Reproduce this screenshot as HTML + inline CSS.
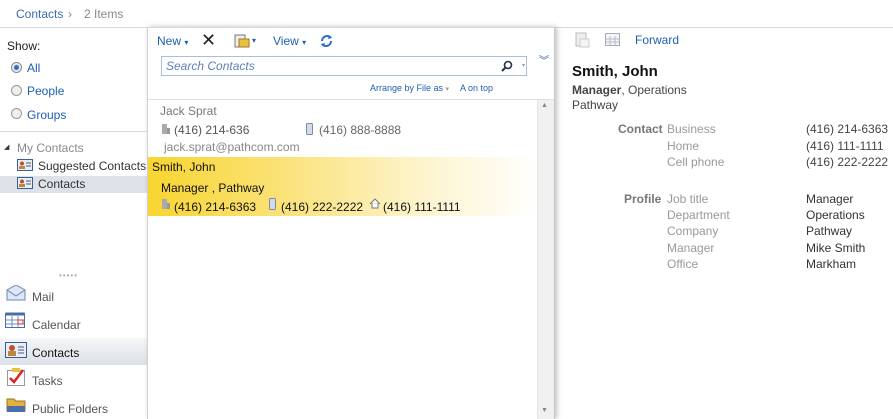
<!DOCTYPE html>
<html><head><meta charset="utf-8"><style>
*{margin:0;padding:0;box-sizing:border-box}
body{width:893px;height:419px;overflow:hidden;background:#fff;font-family:"Liberation Sans",sans-serif;font-size:12px;color:#333;position:relative}
.a{position:absolute;white-space:nowrap}
.blue{color:#1e5fb4}
.gray{color:#8a8a8a}
.ic{position:absolute}
</style></head><body>
<!-- top bar -->
<div class="a" style="left:16px;top:7px;font-size:12px;color:#3b6ea8">Contacts</div>
<div class="a" style="left:68px;top:7px;color:#888">›</div>
<div class="a" style="left:84px;top:7px;color:#888">2 Items</div>
<div class="a" style="left:0;top:27px;width:893px;height:1px;background:#d8d8d8"></div>

<!-- left pane -->
<div class="a" style="left:7px;top:39px;color:#222">Show:</div>
<div class="a" style="left:11px;top:62px;width:11px;height:11px;border-radius:50%;border:1px solid #888;background:radial-gradient(#2a6ebc 30%,#cde 45%,#fff 70%)"></div>
<div class="a blue" style="left:27px;top:61px">All</div>
<div class="a" style="left:11px;top:85px;width:11px;height:11px;border-radius:50%;border:1px solid #999;background:#eee"></div>
<div class="a blue" style="left:27px;top:84px">People</div>
<div class="a" style="left:11px;top:108px;width:11px;height:11px;border-radius:50%;border:1px solid #999;background:#eee"></div>
<div class="a blue" style="left:27px;top:108px">Groups</div>
<div class="a" style="left:0;top:131px;width:147px;height:1px;background:#d8d8d8"></div>
<div class="a" style="left:4px;top:143px;font-size:7px;color:#333">◢</div>
<div class="a gray" style="left:17px;top:141px">My Contacts</div>
<div class="a" style="left:0;top:176px;width:147px;height:17px;background:#dde2e9"></div>
<svg class="ic" style="left:17px;top:159px" width="16" height="12"><rect x="0.5" y="0.5" width="15" height="11" fill="#e8eef6" stroke="#3a5f96"/><circle cx="5" cy="4.5" r="2" fill="#c0502a"/><rect x="2" y="7" width="6" height="3" fill="#b84"/><line x1="9" y1="4" x2="14" y2="4" stroke="#557"/><line x1="9" y1="7" x2="14" y2="7" stroke="#557"/></svg>
<div class="a" style="left:38px;top:159px">Suggested Contacts</div>
<svg class="ic" style="left:17px;top:177px" width="16" height="12"><rect x="0.5" y="0.5" width="15" height="11" fill="#e8eef6" stroke="#3a5f96"/><circle cx="5" cy="4.5" r="2" fill="#c0502a"/><rect x="2" y="7" width="6" height="3" fill="#b84"/><line x1="9" y1="4" x2="14" y2="4" stroke="#557"/><line x1="9" y1="7" x2="14" y2="7" stroke="#557"/></svg>
<div class="a" style="left:38px;top:177px">Contacts</div>
<div class="a" style="left:59px;top:271px;color:#aaa;font-size:8px;letter-spacing:1px">•••••</div>
<!-- bottom nav -->
<svg class="ic" style="left:6px;top:285px" width="20" height="16"><path d="M1 5 L10 0 L19 5 V15 H1 Z" fill="#dde8f4" stroke="#6a87b0"/><path d="M1 5 L10 11 L19 5" fill="none" stroke="#6a87b0"/></svg>
<div class="a" style="left:32px;top:290px;color:#555">Mail</div>
<svg class="ic" style="left:5px;top:312px" width="20" height="16"><rect x="0.5" y="1.5" width="19" height="14" fill="#fff" stroke="#4a6ea8"/><rect x="0.5" y="0.5" width="19" height="3" fill="#4a6ea8"/><path d="M7 4V15M13 4V15M1 8H19M1 12H19" stroke="#6a8cc0"/><rect x="13" y="8" width="5" height="4" fill="none" stroke="#d33"/></svg>
<div class="a" style="left:32px;top:318px;color:#555">Calendar</div>
<div class="a" style="left:0;top:338px;width:147px;height:27px;background:linear-gradient(#f4f6f8,#dde2e8)"></div>
<svg class="ic" style="left:5px;top:342px" width="22" height="16"><rect x="0.5" y="0.5" width="21" height="15" fill="#e8eef6" stroke="#3a5f96"/><circle cx="7" cy="6" r="3" fill="#c0502a"/><rect x="3" y="9" width="8" height="5" fill="#b84"/><path d="M13 5H19M13 8H19M13 11H19" stroke="#557"/></svg>
<div class="a" style="left:32px;top:346px;color:#111">Contacts</div>
<svg class="ic" style="left:6px;top:367px" width="20" height="20"><rect x="1.5" y="3.5" width="17" height="15" fill="#fff" stroke="#999"/><rect x="6" y="1" width="8" height="4" fill="#e8c040"/><path d="M4 11 L8 15 L17 3" fill="none" stroke="#d22" stroke-width="2.5"/></svg>
<div class="a" style="left:32px;top:374px;color:#555">Tasks</div>
<svg class="ic" style="left:5px;top:395px" width="22" height="18"><path d="M2 4H9L11 6H20V16H2Z" fill="#e0b040" stroke="#a07820"/><rect x="2" y="11" width="18" height="6" fill="#4a6ea8"/></svg>
<div class="a" style="left:32px;top:402px;color:#555">Public Folders</div>

<!-- middle pane -->
<div class="a" style="left:147px;top:27px;width:408px;height:392px;border-left:1px solid #d0d0d0;border-right:1px solid #c8c8c8;border-top:1px solid #d8d8d8;box-shadow:2px 0 5px rgba(0,0,0,0.25);background:#fff"></div>
<div class="a blue" style="left:157px;top:34px">New <span style="font-size:8px">▾</span></div>
<div class="a" style="left:201px;top:30px;font-size:18px;color:#222">✕</div>
<svg class="ic" style="left:234px;top:34px" width="16" height="14"><rect x="1" y="1" width="10" height="12" fill="#eee" stroke="#777"/><rect x="5" y="5" width="10" height="8" fill="#e8c040" stroke="#a07820"/></svg>
<div class="a" style="left:252px;top:36px;font-size:8px;color:#1e5fb4">▾</div>
<div class="a blue" style="left:273px;top:34px">View <span style="font-size:8px">▾</span></div>
<svg class="ic" style="left:320px;top:34px" width="13" height="14"><path d="M2 7a5 5 0 0 1 9-3M11 7a5 5 0 0 1-9 3" fill="none" stroke="#2a6ed0" stroke-width="2"/><path d="M9 1l3 3-4 1z M4 13l-3-3 4-1z" fill="#2a6ed0"/></svg>
<div class="a" style="left:161px;top:56px;width:366px;height:20px;border:1px solid #a8c0e0"></div>
<div class="a" style="left:166px;top:59px;color:#5f80b8;font-style:italic;font-size:12px">Search Contacts</div>
<svg class="ic" style="left:501px;top:60px" width="12" height="12"><circle cx="7" cy="5" r="3.5" fill="none" stroke="#234" stroke-width="1.6"/><line x1="4.5" y1="7.5" x2="1" y2="11" stroke="#234" stroke-width="2"/></svg>
<div class="a" style="left:522px;top:62px;font-size:6px;color:#999">▾</div>
<div class="a" style="left:539px;top:58px;font-size:10px;color:#2a5ea8;line-height:7px">︾</div>
<div class="a blue" style="left:370px;top:83px;font-size:9px">Arrange by File as <span style="color:#999;font-size:7px">▾</span></div>
<div class="a blue" style="left:460px;top:83px;font-size:9px">A on top</div>
<div class="a" style="left:148px;top:99px;width:406px;height:1px;background:#e0e0e0"></div>
<!-- scrollbar -->
<div class="a" style="left:537px;top:100px;width:17px;height:319px;background:#f0f0f0;border-left:1px solid #e4e4e4"></div>
<div class="a" style="left:541px;top:102px;font-size:7px;color:#888">▲</div>
<div class="a" style="left:541px;top:407px;font-size:7px;color:#888">▼</div>
<!-- item 1 -->
<div class="a" style="left:160px;top:104px;color:#777">Jack Sprat</div>
<svg class="ic" style="left:161px;top:123px" width="10" height="12"><rect x="1" y="1" width="5" height="10" fill="#aaa"/><rect x="6" y="5" width="3" height="6" fill="#999"/></svg>
<div class="a" style="left:174px;top:123px;color:#555">(416) 214-636</div>
<svg class="ic" style="left:306px;top:123px" width="7" height="12"><rect x="0.5" y="0.5" width="6" height="11" rx="1" fill="#cde" stroke="#889"/></svg>
<div class="a" style="left:319px;top:123px;color:#666">(416)  888-8888</div>
<div class="a" style="left:164px;top:140px;color:#888">jack.sprat@pathcom.com</div>
<!-- item 2 selected -->
<div class="a" style="left:148px;top:157px;width:389px;height:59px;background:linear-gradient(90deg,#f8d530 0%,#fae27a 35%,#fdf4cc 70%,#fff 100%)"></div>
<div class="a" style="left:152px;top:160px;color:#111">Smith, John</div>
<div class="a" style="left:161px;top:181px;color:#111">Manager , Pathway</div>
<svg class="ic" style="left:161px;top:198px" width="10" height="12"><rect x="1" y="1" width="5" height="10" fill="#aaa"/><rect x="6" y="5" width="3" height="6" fill="#999"/></svg>
<div class="a" style="left:174px;top:200px;color:#111">(416) 214-6363</div>
<svg class="ic" style="left:269px;top:198px" width="7" height="12"><rect x="0.5" y="0.5" width="6" height="11" rx="1" fill="#cde" stroke="#889"/></svg>
<div class="a" style="left:281px;top:200px;color:#111">(416) 222-2222</div>
<svg class="ic" style="left:369px;top:198px" width="12" height="11"><path d="M1 6L6 1L11 6M3 5V10H9V5" fill="#fff" stroke="#777"/></svg>
<div class="a" style="left:383px;top:200px;color:#111">(416) 111-1111</div>

<!-- right pane -->
<svg class="ic" style="left:574px;top:32px" width="16" height="16"><rect x="2" y="1" width="10" height="13" fill="#eee" stroke="#bbb"/><rect x="6" y="7" width="9" height="8" fill="#f4f4f4" stroke="#ccc"/></svg>
<svg class="ic" style="left:605px;top:33px" width="15" height="13"><rect x="0.5" y="0.5" width="14" height="12" fill="#f4f6fa" stroke="#aab"/><path d="M5 3V12M10 3V12M1 6H14M1 9H14" stroke="#bbc"/></svg>
<div class="a blue" style="left:635px;top:33px">Forward</div>
<div class="a" style="left:572px;top:63px;font-size:15px;font-weight:bold;color:#111">Smith, John</div>
<div class="a" style="left:572px;top:83px;color:#444"><b>Manager</b>, Operations</div>
<div class="a" style="left:572px;top:98px;color:#444">Pathway</div>
<div class="a" style="left:618px;top:122px;font-weight:bold;color:#777">Contact</div>
<div class="a" style="left:667px;top:122px;color:#999">Business</div>
<div class="a" style="left:667px;top:139px;color:#999">Home</div>
<div class="a" style="left:667px;top:155px;color:#999">Cell phone</div>
<div class="a" style="left:806px;top:122px;color:#444">(416) 214-6363</div>
<div class="a" style="left:806px;top:139px;color:#444">(416) 111-1111</div>
<div class="a" style="left:806px;top:155px;color:#444">(416) 222-2222</div>
<div class="a" style="left:624px;top:192px;font-weight:bold;color:#777">Profile</div>
<div class="a" style="left:667px;top:192px;color:#999">Job title</div>
<div class="a" style="left:667px;top:208px;color:#999">Department</div>
<div class="a" style="left:667px;top:224px;color:#999">Company</div>
<div class="a" style="left:667px;top:241px;color:#999">Manager</div>
<div class="a" style="left:667px;top:257px;color:#999">Office</div>
<div class="a" style="left:806px;top:192px;color:#333">Manager</div>
<div class="a" style="left:806px;top:208px;color:#333">Operations</div>
<div class="a" style="left:806px;top:224px;color:#333">Pathway</div>
<div class="a" style="left:806px;top:241px;color:#333">Mike Smith</div>
<div class="a" style="left:806px;top:257px;color:#333">Markham</div>
</body></html>
